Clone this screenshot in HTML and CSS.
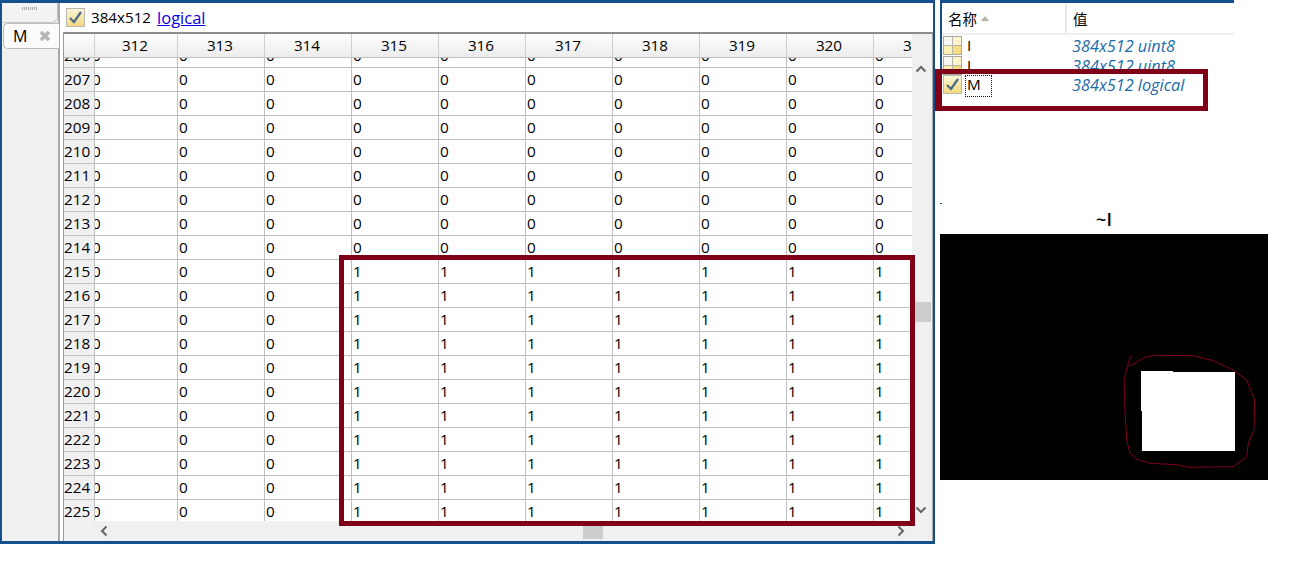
FILE: index.html
```html
<!DOCTYPE html>
<html lang="zh">
<head>
<meta charset="utf-8">
<title>Variables - M</title>
<link rel="stylesheet" href="styles.css">
</head>
<body>
<svg class="defs" width="0" height="0" aria-hidden="true">
  <defs>
    <linearGradient id="ico" x1="0" y1="0" x2="0" y2="1">
      <stop offset="0" stop-color="#fbf6dc"/>
      <stop offset="1" stop-color="#f3d77e"/>
    </linearGradient>
    <symbol id="icon-check" viewBox="0 0 19 19">
      <rect x="0.5" y="0.5" width="18" height="18" fill="url(#ico)" stroke="#b9b9ae"/>
      <path d="M4 10l4 4 7-10" fill="none" stroke="#4d6b85" stroke-width="2.2"/>
    </symbol>
    <symbol id="icon-grid" viewBox="0 0 19 19">
      <rect x="0.5" y="0.5" width="18" height="18" fill="#f7e7a6" stroke="#a9a99f"/>
      <rect x="1" y="1" width="8" height="8" fill="#f6f6f2"/>
      <rect x="10" y="1" width="8" height="8" fill="#fbf4cd"/>
      <rect x="1" y="10" width="8" height="8" fill="#fbf0b8"/>
      <rect x="10" y="10" width="8" height="8" fill="#f5dc85"/>
      <path d="M9.5 1v17M1 9.5h17" stroke="#b5b5aa"/>
    </symbol>
  </defs>
</svg>
<div class="page">
  <main class="editor">
    <aside class="tabs">
      <div class="tab-grip"><span class="grip"></span></div>
      <div class="tab"><span>M</span><svg class="tab-close" width="14" height="14" viewBox="0 0 14 14"><path d="M3 3l8 8M11 3l-8 8" stroke="#b4b4b4" stroke-width="3.500"/></svg></div>
    </aside>
    <section class="content">
      <div class="summary">
        <svg class="summary-icon" width="19" height="19"><use href="#icon-check"/></svg>
        <span>384x512</span>
        <a href="#" class="type-link">logical</a>
      </div>
      <div class="sheet">
        <div class="sheet-view">
          <div class="grid">
            <div class="row head"><b class="rh"></b><i class="first">312</i><i>313</i><i>314</i><i>315</i><i>316</i><i>317</i><i>318</i><i>319</i><i>320</i><i>321</i></div>
            <div class="body">
              <div class="row lead"><b class="rh">206</b><i class="first"><u>0</u></i><i>0</i><i>0</i><i>0</i><i>0</i><i>0</i><i>0</i><i>0</i><i>0</i><i>0</i></div>
              <div class="row"><b class="rh">207</b><i class="first"><u>0</u></i><i>0</i><i>0</i><i>0</i><i>0</i><i>0</i><i>0</i><i>0</i><i>0</i><i>0</i></div>
              <div class="row"><b class="rh">208</b><i class="first"><u>0</u></i><i>0</i><i>0</i><i>0</i><i>0</i><i>0</i><i>0</i><i>0</i><i>0</i><i>0</i></div>
              <div class="row"><b class="rh">209</b><i class="first"><u>0</u></i><i>0</i><i>0</i><i>0</i><i>0</i><i>0</i><i>0</i><i>0</i><i>0</i><i>0</i></div>
              <div class="row"><b class="rh">210</b><i class="first"><u>0</u></i><i>0</i><i>0</i><i>0</i><i>0</i><i>0</i><i>0</i><i>0</i><i>0</i><i>0</i></div>
              <div class="row"><b class="rh">211</b><i class="first"><u>0</u></i><i>0</i><i>0</i><i>0</i><i>0</i><i>0</i><i>0</i><i>0</i><i>0</i><i>0</i></div>
              <div class="row"><b class="rh">212</b><i class="first"><u>0</u></i><i>0</i><i>0</i><i>0</i><i>0</i><i>0</i><i>0</i><i>0</i><i>0</i><i>0</i></div>
              <div class="row"><b class="rh">213</b><i class="first"><u>0</u></i><i>0</i><i>0</i><i>0</i><i>0</i><i>0</i><i>0</i><i>0</i><i>0</i><i>0</i></div>
              <div class="row"><b class="rh">214</b><i class="first"><u>0</u></i><i>0</i><i>0</i><i>0</i><i>0</i><i>0</i><i>0</i><i>0</i><i>0</i><i>0</i></div>
              <div class="row"><b class="rh">215</b><i class="first"><u>0</u></i><i>0</i><i>0</i><i>1</i><i>1</i><i>1</i><i>1</i><i>1</i><i>1</i><i>1</i></div>
              <div class="row"><b class="rh">216</b><i class="first"><u>0</u></i><i>0</i><i>0</i><i>1</i><i>1</i><i>1</i><i>1</i><i>1</i><i>1</i><i>1</i></div>
              <div class="row"><b class="rh">217</b><i class="first"><u>0</u></i><i>0</i><i>0</i><i>1</i><i>1</i><i>1</i><i>1</i><i>1</i><i>1</i><i>1</i></div>
              <div class="row"><b class="rh">218</b><i class="first"><u>0</u></i><i>0</i><i>0</i><i>1</i><i>1</i><i>1</i><i>1</i><i>1</i><i>1</i><i>1</i></div>
              <div class="row"><b class="rh">219</b><i class="first"><u>0</u></i><i>0</i><i>0</i><i>1</i><i>1</i><i>1</i><i>1</i><i>1</i><i>1</i><i>1</i></div>
              <div class="row"><b class="rh">220</b><i class="first"><u>0</u></i><i>0</i><i>0</i><i>1</i><i>1</i><i>1</i><i>1</i><i>1</i><i>1</i><i>1</i></div>
              <div class="row"><b class="rh">221</b><i class="first"><u>0</u></i><i>0</i><i>0</i><i>1</i><i>1</i><i>1</i><i>1</i><i>1</i><i>1</i><i>1</i></div>
              <div class="row"><b class="rh">222</b><i class="first"><u>0</u></i><i>0</i><i>0</i><i>1</i><i>1</i><i>1</i><i>1</i><i>1</i><i>1</i><i>1</i></div>
              <div class="row"><b class="rh">223</b><i class="first"><u>0</u></i><i>0</i><i>0</i><i>1</i><i>1</i><i>1</i><i>1</i><i>1</i><i>1</i><i>1</i></div>
              <div class="row"><b class="rh">224</b><i class="first"><u>0</u></i><i>0</i><i>0</i><i>1</i><i>1</i><i>1</i><i>1</i><i>1</i><i>1</i><i>1</i></div>
              <div class="row"><b class="rh">225</b><i class="first"><u>0</u></i><i>0</i><i>0</i><i>1</i><i>1</i><i>1</i><i>1</i><i>1</i><i>1</i><i>1</i></div>
            </div>
          </div>
          <div class="vbar">
            <svg width="12" height="8" viewBox="0 0 12 8"><path d="M1.500 6.500L6 2l4.500 4.500" fill="none" stroke="#666" stroke-width="2"/></svg>
            <span class="vthumb"></span>
            <svg width="12" height="8" viewBox="0 0 12 8"><path d="M1.500 1.500L6 6l4.500-4.500" fill="none" stroke="#666" stroke-width="2"/></svg>
          </div>
        </div>
        <div class="hbar">
          <svg width="8" height="12" viewBox="0 0 8 12"><path d="M6.500 1.500L2 6l4.500 4.500" fill="none" stroke="#666" stroke-width="2"/></svg>
          <span class="hthumb"></span>
          <svg width="8" height="12" viewBox="0 0 8 12"><path d="M1.500 1.500L6 6l-4.500 4.500" fill="none" stroke="#666" stroke-width="2"/></svg>
        </div>
      </div>
    </section>
  </main>
  <aside class="side">
    <div class="workspace">
      <div class="ws-head">
        <div class="ws-name">名称<span class="sort"></span></div>
        <div class="ws-value">值</div>
      </div>
      <div class="ws-row"><svg width="19" height="19"><use href="#icon-grid"/></svg><span class="ws-var">I</span><span class="ws-val">384x512 uint8</span></div>
      <div class="ws-row"><svg width="19" height="19"><use href="#icon-grid"/></svg><span class="ws-var">J</span><span class="ws-val">384x512 uint8</span></div>
      <div class="ws-row ws-current"><svg width="19" height="19"><use href="#icon-check"/></svg><span class="ws-var selected">M</span><span class="ws-val">384x512 logical</span></div>
    </div>
    <span class="speck"></span>
    <figure class="plot">
      <figcaption>~I</figcaption>
      <svg class="plot-image" width="328" height="246" viewBox="0 0 328 246">
        <rect width="328" height="246" fill="#000"/>
        <path d="M201 137h32v1h62v79H202v-40h-1z" fill="#fff"/>
        <path d="M190.700 122L187.700 131L184 146L185 176L186.700 206L190 219.300L196.700 225.300L210 229.300L236.700 230.700L248.300 233.300L293.300 232.700L306.700 222.700L308.300 209.300L314 196L314.700 166L306.700 146L293.300 136L273.300 126.700L253.300 121.700L215 121.300L205 123.300L193.300 130L188.300 132" fill="none" stroke="#800018" stroke-width="1"/>
      </svg>
    </figure>
  </aside>
  <div class="mark mark-table"></div>
  <div class="mark mark-var"></div>
</div>
</body>
</html>
```
FILE: styles.css
```css
* { box-sizing: border-box; }
html, body { margin: 0; padding: 0; background: #fff; }
body { font-family: "Open Sans", "Noto Sans CJK SC", sans-serif; font-size: 15.300px; color: #000; overflow: hidden; }
.defs { position: absolute; }
.page { position: relative; display: flex; width: 1290px; height: 567px; align-items: flex-start; }

.editor { display: flex; width: 935px; height: 544px; border: 2px solid #15508c; border-top-width: 3px; border-bottom-width: 3px; flex: none; }
.tabs { width: 58px; background: #f0f0f0; border-right: 2px solid #a8a8a8; flex: none; }
.tab-grip { height: 20px; margin-left: 1px; background: #f3f3f3; border: 1px solid #c4c4c4; border-top: 0; border-left: 0; border-radius: 0 0 6px 0; display: flex; justify-content: center; padding-top: 4px; }
.grip { width: 16px; height: 3px; background: repeating-linear-gradient(90deg, #aaa 0 1px, transparent 1px 2px); }
.tab { height: 26px; margin: 0 -1px 0 1px; background: #fbfbfb; border: 1px solid #bdbdbd; border-right: 0; border-radius: 5px 0 0 5px; display: flex; align-items: center; padding: 0 0 1px 9px; font-size: 16px; }
.tab-close { margin-left: 11px; }

.content { flex: 1; display: flex; flex-direction: column; min-width: 0; margin-left: 3px; }
.summary { height: 29px; display: flex; align-items: center; gap: 6px; padding: 0 0 1px 3px; background: #fff; font-size: 15.200px; }
.type-link { color: #0a00e6; text-decoration: underline; font-size: 16.500px; }

.sheet { flex: 1; display: flex; flex-direction: column; border-top: 2px solid #8c8c8c; border-left: 1px solid #9c9c9c; border-right: 1px solid #a8a8a8; min-height: 0; background: #f0f0f0; }
.sheet-view { display: flex; height: 487px; flex: none; }
.grid { width: 848px; overflow: hidden; flex: none; background: #fff; }
.row { display: flex; height: 24px; line-height: 23px; border-bottom: 1px solid #c0c0c0; white-space: nowrap; }
.row i { font-style: normal; flex: 0 0 87px; width: 87px; padding-left: 1px; border-right: 1px solid #c0c0c0; overflow: hidden; }
.row .rh { font-weight: 400; flex: 0 0 31px; width: 31px; padding-left: 0; background: #f0f0f0; border-right: 1px solid #c0c0c0; overflow: hidden; }
.row .first { flex: 0 0 83px; width: 83px; padding-left: 0; }
.row .first u { text-decoration: none; display: inline-block; margin-left: -3px; }
.body { height: 463px; overflow: hidden; }
.lead { margin-top: -14px; }
.head { background: linear-gradient(#fefefe, #ececec); }
.head i { text-align: center; padding-left: 0; padding-right: 2px; border-right: 1px solid #cfcfcf; }
.head .rh { background: transparent; border-right: 1px solid #cfcfcf; }
.vbar { width: 20px; display: flex; flex-direction: column; align-items: center; position: relative; background: #f0f0f0; justify-content: space-between; padding: 31px 2px 7px 0; }
.vthumb { position: absolute; left: 3px; top: 268px; width: 16px; height: 20px; background: #cdcdcd; }
.hbar { flex: 1; display: flex; align-items: center; justify-content: space-between; position: relative; padding: 0 27px 0 36px; }
.hthumb { position: absolute; left: 519px; top: 0; width: 20px; height: 16px; margin-top: 2px; background: #cdcdcd; }

.side { width: 330px; margin-left: 5px; flex: none; }
.workspace { width: 294px; height: 106px; border-top: 3px solid #15508c; border-left: 2px solid #15508c; }
.ws-head { display: flex; height: 32px; border-bottom: 2px solid #eee; align-items: center; font-size: 14.500px; padding-top: 1px; }
.ws-name { width: 125px; padding-left: 6px; display: flex; align-items: center; border-right: 2px solid #e8e8e8; height: 100%; }
.sort { width: 0; height: 0; margin-left: 4px; border: 4.500px solid transparent; border-top: 0; border-bottom: 5px solid #b4b4a4; }
.ws-value { padding-left: 6px; }
.ws-row { display: flex; align-items: center; height: 20px; padding-left: 1px; position: relative; }
.ws-current { margin-top: -1px; }
.ws-row svg { flex: none; }
.ws-var { width: 110px; padding-left: 5px; flex: none; line-height: 20px; }
.selected::after { content: ""; position: absolute; left: 23px; top: 1px; width: 25px; height: 20px; border: 1px dotted #111; }
.ws-val { font-style: italic; color: #1c6ba8; font-size: 16.300px; padding-top: 2px; }

.speck { display: block; width: 2px; height: 1px; margin-top: 97px; background: #15508c; }
.plot { margin: 0; width: 328px; }
.plot figcaption { height: 30px; line-height: 30px; text-align: center; font-size: 18px; color: #000; font-weight: 600; }
.plot-image { display: block; }

.mark { position: absolute; border: 5px solid #800018; pointer-events: none; }
.mark-table { left: 339px; top: 255px; width: 576px; height: 271px; }
.mark-var { left: 935px; top: 69px; width: 273px; height: 42px; border-left-width: 7px; }
```
